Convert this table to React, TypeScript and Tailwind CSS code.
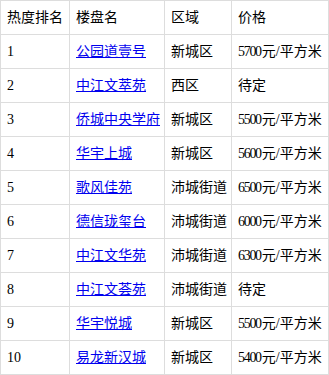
import React from "react";

const rows: [string, string, string, string][] = [
  ["1", "公园道壹号", "新城区", "5700元/平方米"],
  ["2", "中江文萃苑", "西区", "待定"],
  ["3", "侨城中央学府", "新城区", "5500元/平方米"],
  ["4", "华宇上城", "新城区", "5600元/平方米"],
  ["5", "歌风佳苑", "沛城街道", "6500元/平方米"],
  ["6", "德信珑玺台", "沛城街道", "6000元/平方米"],
  ["7", "中江文华苑", "沛城街道", "6300元/平方米"],
  ["8", "中江文荟苑", "沛城街道", "待定"],
  ["9", "华宇悦城", "新城区", "5500元/平方米"],
  ["10", "易龙新汉城", "新城区", "5400元/平方米"],
];

function Price({ v }: { v: string }) {
  const m = v.match(/^(\d+)(.*)$/);
  if (!m) return <>{v}</>;
  return (
    <>
      <span className="tracking-[-1.3px]">{m[1]}</span>
      <span className="ml-[1px]">{m[2]}</span>
    </>
  );
}

export default function App() {
  const td = "border border-[#dddddd] px-[6px] py-[6px] leading-[21px] whitespace-nowrap text-left align-middle font-normal";
  return (
    <div className="bg-white w-[329px] h-[375px] text-black text-[14px]" style={{ fontFamily: '"Liberation Serif", "Noto Sans CJK SC", serif' }}>
      <table className="border-collapse table-fixed w-[328px]">
        <colgroup>
          <col className="w-[69px]" />
          <col className="w-[95px]" />
          <col className="w-[67px]" />
          <col className="w-[97px]" />
        </colgroup>
        <thead>
          <tr>
            <th className={td}>热度排名</th>
            <th className={td}>楼盘名</th>
            <th className={td}>区域</th>
            <th className={td}>价格</th>
          </tr>
        </thead>
        <tbody>
          {rows.map((r) => (
            <tr key={r[0]}>
              <td className={td}>{r[0]}</td>
              <td className={td}>
                <a href="#" className="text-[#0000ee] underline">{r[1]}</a>
              </td>
              <td className={td}>{r[2]}</td>
              <td className={td}>
                <Price v={r[3]} />
              </td>
            </tr>
          ))}
        </tbody>
      </table>
    </div>
  );
}
